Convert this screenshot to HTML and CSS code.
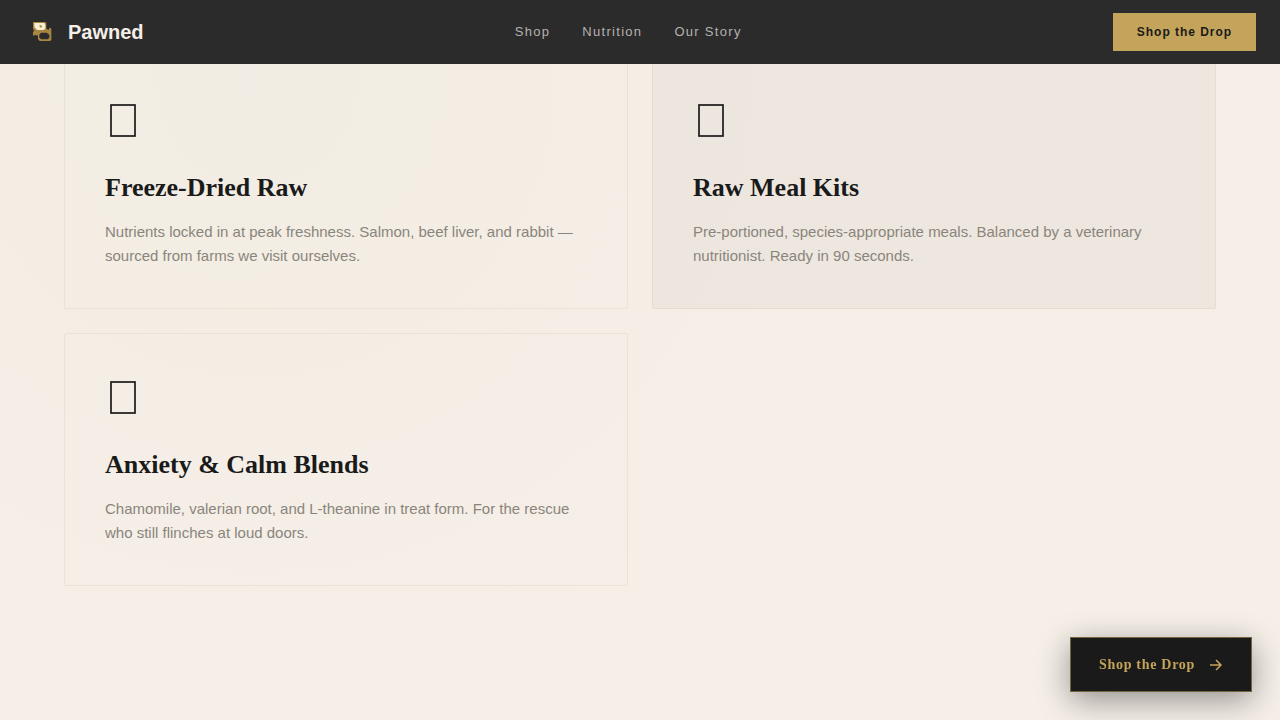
FILE: index.html
```html
<!DOCTYPE html>
<html lang="en">
<head>
<meta charset="utf-8">
<meta name="viewport" content="width=device-width, initial-scale=1">
<title>Pawned</title>
<link rel="stylesheet" href="styles.css">
</head>
<body>
<header class="site-header">
  <a class="brand" href="#">
    <svg class="brand-mark" viewBox="1 6 108 108" aria-hidden="true">
      <path d="M28 30H65L68 34V50L76 54V49L80 47L83 51V84L79 87H48L43 82V71L36 69L28 71V60L32 56L28 51Z" fill="#a98640"/>
      <path d="M32 33H62L65 38V50L59 54H40L32 45Z" fill="#f7eed5"/>
      <path d="M49 38L56 43L52 48L47 43Z" fill="#b08c46"/>
      <path d="M52 62H69L77 68V77L72 82H53L47 77V68Z" fill="#2c2c2d"/>
    </svg>
    <span>Pawned</span>
  </a>
  <nav class="site-nav" aria-label="Main">
    <a href="#">Shop</a>
    <a href="#">Nutrition</a>
    <a href="#">Our Story</a>
  </nav>
  <button class="header-cta" type="button">Shop the Drop</button>
</header>
<main class="products">
  <article class="card">
    <div class="card-icon"><svg viewBox="0 0 26 33" aria-hidden="true"><rect x="1" y="1" width="24" height="31"/></svg></div>
    <h2>Freeze-Dried Raw</h2>
    <p>Nutrients locked in at peak freshness. Salmon, beef liver, and rabbit — sourced from farms we visit ourselves.</p>
  </article>
  <article class="card card-shaded">
    <div class="card-icon"><svg viewBox="0 0 26 33" aria-hidden="true"><rect x="1" y="1" width="24" height="31"/></svg></div>
    <h2>Raw Meal Kits</h2>
    <p>Pre-portioned, species-appropriate meals. Balanced by a veterinary nutritionist. Ready in 90 seconds.</p>
  </article>
  <article class="card">
    <div class="card-icon"><svg viewBox="0 0 26 33" aria-hidden="true"><rect x="1" y="1" width="24" height="31"/></svg></div>
    <h2>Anxiety &amp; Calm Blends</h2>
    <p>Chamomile, valerian root, and L-theanine in treat form. For the rescue who still flinches at loud doors.</p>
  </article>
</main>
<button class="floating-cta" type="button">
  <span>Shop the Drop</span>
  <svg viewBox="0 0 16 16" aria-hidden="true"><path d="M3 8H14M9 3L14 8L9 13"/></svg>
</button>
</body>
</html>
```
FILE: styles.css
```css
* {
  box-sizing: border-box;
}

body {
  margin: 0;
  min-height: 100vh;
  background: radial-gradient(ellipse 600px 600px at 20% 80px, #f2ede4 0%, #f3ede4 35%, #f4eee6 65%, #f5efe8 100%) #f5efe8;
  color: #1a1a1a;
  font-family: "Liberation Sans", Arial, sans-serif;
}

a {
  color: inherit;
  text-decoration: none;
}

.site-header {
  position: fixed;
  top: 0;
  left: 0;
  right: 0;
  z-index: 10;
  display: flex;
  align-items: center;
  justify-content: space-between;
  height: 64px;
  padding: 0 24px;
  background: #2b2b2c;
}

.brand {
  display: flex;
  align-items: center;
  gap: 8px;
  color: #f5efe8;
  font-size: 20px;
  font-weight: 700;
  line-height: 24px;
}

.brand-mark {
  width: 36px;
  height: 36px;
}

.site-nav {
  display: flex;
  gap: 32px;
  color: #b5b2ae;
  font-size: 13px;
  line-height: 16px;
  letter-spacing: 0.1em;
}

.header-cta {
  padding: 12px 24px;
  border: 0;
  background: #c4a35a;
  color: #1a1a1a;
  font: 700 12px/14px "Liberation Sans", Arial, sans-serif;
  letter-spacing: 0.08em;
}

.products {
  display: grid;
  grid-template-columns: repeat(2, 1fr);
  gap: 24px;
  padding: 56px 64px 80px;
}

.card {
  padding: 40px;
  border: 1px solid rgba(180, 170, 130, 0.16);
  border-radius: 2px;
}

.card-shaded {
  background: rgba(80, 60, 40, 0.04);
}

.card-icon {
  display: flex;
  align-items: flex-start;
  height: 48px;
  margin-bottom: 24px;
  padding: 7px 0 0 5px;
}

.card-icon svg {
  width: 26px;
  height: 33px;
  fill: none;
  stroke: #1a1a1a;
  stroke-width: 1.7;
}

.card h2 {
  margin: 0 0 14px;
  font: 700 26px/37px "Liberation Serif", "Times New Roman", serif;
}

.card p {
  margin: 0;
  color: #8a857c;
  font-size: 15px;
  line-height: 24px;
}

.floating-cta {
  position: fixed;
  right: 28px;
  bottom: 28px;
  display: flex;
  align-items: center;
  gap: 12px;
  padding: 18px 28px;
  border: 1px solid #75643c;
  background: #1a1a1a;
  color: #c4a35a;
  box-shadow: 0 8px 32px rgba(0, 0, 0, 0.4);
  font: 700 14px/17px "Liberation Serif", "Times New Roman", serif;
  letter-spacing: 0.05em;
}

.floating-cta svg {
  width: 16px;
  height: 16px;
  fill: none;
  stroke: currentColor;
  stroke-width: 1.5;
}
```
